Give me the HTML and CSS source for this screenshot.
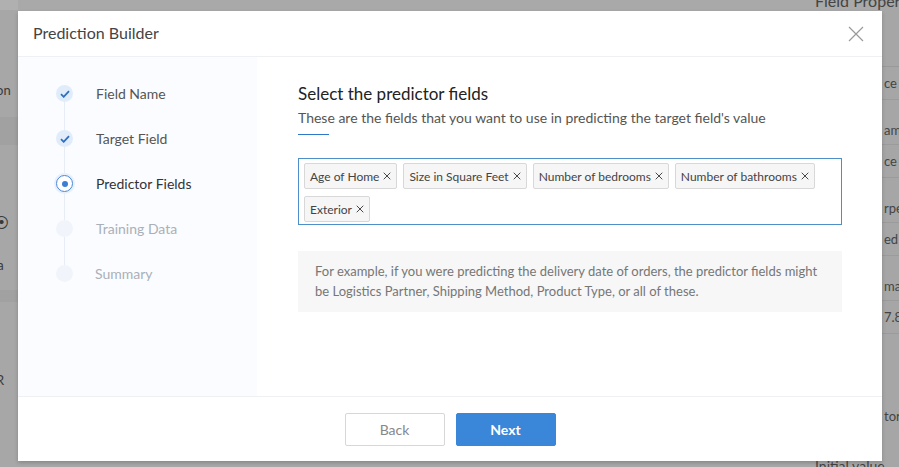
FILE: index.html
```html
<!DOCTYPE html>
<html>
<head>
<meta charset="utf-8">
<link rel="stylesheet" href="styles.css">
</head>
<body>
<div class="backdrop">
  <div class="bg-left">
    <div class="bl-toprect"></div>
    <div class="bl-row bl-top"><span class="bl-bold">p</span></div>
    <div class="bl-row bl-tion">tion</div>
    <div class="bl-band"></div>
    <div class="bl-row bl-icon">⦿</div>
    <div class="bl-row">tra</div>
    <div class="bl-band bl-band2"></div>
    <div class="bl-row bl-sm">]</div>
    <div class="bl-row bl-sm">R</div>
  </div>
  <div class="bg-mid"></div>
  <div class="bg-right">
    <div class="br-head">Field Proper</div>
    <div class="br-row">ce</div>
    <div class="br-row br-tall">ame</div>
    <div class="br-row">ce</div>
    <div class="br-row br-tall">rpe</div>
    <div class="br-row">ed</div>
    <div class="br-row br-tall">mat</div>
    <div class="br-row">7.8</div>
    <div class="br-gap"></div>
    <div class="br-row br-last">tor</div>
    <div class="br-foot">Initial value</div>
  </div>
</div>

<div class="modal">
  <div class="modal-header">
    <span class="modal-title">Prediction Builder</span>
    <svg class="close" width="16" height="16" viewBox="0 0 16 16"><path d="M1 1L15 15M15 1L1 15" stroke="#9a9a9a" stroke-width="1.2" fill="none"/></svg>
  </div>
  <div class="modal-body">
    <div class="steps">
      <div class="step done">
        <span class="dot"><svg width="10" height="8" viewBox="0 0 10 8"><path d="M1 4.2L3.7 6.8L9 1.2" stroke="#2f6fbd" stroke-width="1.8" fill="none"/></svg></span>
        <span class="label">Field Name</span>
      </div>
      <div class="step done">
        <span class="dot"><svg width="10" height="8" viewBox="0 0 10 8"><path d="M1 4.2L3.7 6.8L9 1.2" stroke="#2f6fbd" stroke-width="1.8" fill="none"/></svg></span>
        <span class="label">Target Field</span>
      </div>
      <div class="step active">
        <span class="dot"><span class="inner"></span></span>
        <span class="label">Predictor Fields</span>
      </div>
      <div class="step todo">
        <span class="dot"></span>
        <span class="label">Training Data</span>
      </div>
      <div class="step todo last">
        <span class="dot"></span>
        <span class="label">Summary</span>
      </div>
    </div>
    <div class="content">
      <h2 class="heading">Select the predictor fields</h2>
      <p class="sub">These are the fields that you want to use in predicting the target field's value</p>
      <div class="underline"></div>
      <div class="tagbox">
        <span class="tag">Age of Home<svg class="x" width="9" height="9" viewBox="0 0 9 9"><path d="M0.8 0.8L8.2 8.2M8.2 0.8L0.8 8.2" stroke="#444" stroke-width="1.1" fill="none"/></svg></span>
        <span class="tag">Size in Square Feet<svg class="x" width="9" height="9" viewBox="0 0 9 9"><path d="M0.8 0.8L8.2 8.2M8.2 0.8L0.8 8.2" stroke="#444" stroke-width="1.1" fill="none"/></svg></span>
        <span class="tag">Number of bedrooms<svg class="x" width="9" height="9" viewBox="0 0 9 9"><path d="M0.8 0.8L8.2 8.2M8.2 0.8L0.8 8.2" stroke="#444" stroke-width="1.1" fill="none"/></svg></span>
        <span class="tag">Number of bathrooms<svg class="x" width="9" height="9" viewBox="0 0 9 9"><path d="M0.8 0.8L8.2 8.2M8.2 0.8L0.8 8.2" stroke="#444" stroke-width="1.1" fill="none"/></svg></span>
        <span class="tag">Exterior<svg class="x" width="9" height="9" viewBox="0 0 9 9"><path d="M0.8 0.8L8.2 8.2M8.2 0.8L0.8 8.2" stroke="#444" stroke-width="1.1" fill="none"/></svg></span>
      </div>
      <div class="info">For example, if you were predicting the delivery date of orders, the predictor fields might be Logistics Partner, Shipping Method, Product Type, or all of these.</div>
    </div>
  </div>
  <div class="modal-footer">
    <button class="btn btn-back">Back</button>
    <button class="btn btn-next">Next</button>
  </div>
</div>
</body>
</html>
```

FILE: styles.css
```css
* { box-sizing: border-box; }
html, body { margin: 0; padding: 0; }
body {
  width: 899px;
  height: 467px;
  overflow: hidden;
  font-family: Lato, "Open Sans", sans-serif;
  background: #a9a9a9;
  position: relative;
}

/* backdrop (dimmed app behind) */
.backdrop {
  display: flex;
  height: 467px;
  color: #3a3a3a;
  font-size: 13px;
}
.bg-left {
  width: 18px;
  overflow: hidden;
  display: flex;
  flex-direction: column;
  background: #a7a7a7;
}
.bl-toprect { height: 10px; margin-bottom: 40px; background: #b0b0b0; flex: none; }
.bl-row { height: 30px; line-height: 30px; white-space: nowrap; margin-left: -12px; flex: none; }
.bl-top { margin-left: -8px; height: 20px; line-height: 20px; }
.bl-tion { margin-top: 5px; }
.bl-bold { font-weight: 700; font-size: 14px; }
.bl-band { height: 28px; background: #a1a1a1; margin: 12px 0 62px; flex: none; }
.bl-band2 { height: 12px; margin: 10px 0 23px; }
.bl-icon { margin-left: -6px; font-size: 15px; margin-bottom: 13px; }
.bl-sm { margin-left: -4px; margin-bottom: 10px; }
.bg-mid { flex: 1; }
.bg-right {
  width: 17px;
  display: flex;
  flex-direction: column;
  background: #a6a6a6;
}
.br-head {
  height: 67px;
  flex: none;
  margin-left: -67px;
  font-size: 16px;
  line-height: 2px;
  white-space: nowrap;
  color: #444;
  border-bottom: 1px solid #999;
  padding-left: 0;
}
.br-head { margin-right: 0; }
.br-row {
  height: 33px;
  flex: none;
  line-height: 33px;
  white-space: nowrap;
  border-bottom: 1px solid #9b9b9b;
  color: #444;
  padding-left: 2px;
}
.br-tall { height: 45px; line-height: 20px; padding-top: 20px; }
.br-gap { height: 66px; flex: none; }
.br-last { border-bottom: none; }
.br-foot {
  margin-top: 24px;
  white-space: nowrap;
  margin-left: -67px;
  color: #444;
  font-size: 14px;
}

/* modal */
.modal {
  position: absolute;
  left: 18px;
  top: 11px;
  width: 864px;
  height: 450px;
  background: #fff;
  display: flex;
  flex-direction: column;
  box-shadow: 0 2px 4px rgba(0,0,0,0.2);
}
.modal-header {
  height: 46px;
  flex: none;
  display: flex;
  align-items: center;
  justify-content: space-between;
  padding: 0 18px 0 15px;
  border-bottom: 1px solid #eef0f3;
}
.modal-title { font-size: 16px; color: #444; margin-top: -2px; }
.close { display: block; }

.modal-body {
  flex: 1;
  display: flex;
  min-height: 0;
}
.steps {
  width: 239px;
  background: #fafcff;
  padding-top: 14px;
  display: flex;
  flex-direction: column;
}
.step {
  display: flex;
  align-items: center;
  height: 45px;
  position: relative;
  padding-left: 38px;
}
.step::after {
  content: "";
  position: absolute;
  left: 46px;
  top: 30px;
  height: 30px;
  width: 1px;
  background: #e6edf7;
}
.step.last::after { display: none; }
.dot {
  width: 17px;
  height: 17px;
  border-radius: 50%;
  display: flex;
  align-items: center;
  justify-content: center;
  flex: none;
  position: relative;
  z-index: 1;
}
.done .dot { background: #e1ecfa; }
.active .dot { background: #fff; border: 1.5px solid #4a88d6; box-shadow: 0 0 0 2px #e8f0fb; }
.active .inner { width: 6px; height: 6px; border-radius: 50%; background: #3a7fd5; }
.todo .dot { background: #f1f5fb; }
.label { margin-left: 23px; font-size: 14px; }
.done .label { color: #555; }
.active .label { color: #333; }
.todo .label { color: #aab0b8; }
.last .label { margin-left: 22px; }

.content {
  flex: 1;
  padding: 27px 40px 0 41px;
}
.heading {
  margin: 0;
  font-size: 17px;
  font-weight: 400;
  color: #222;
  line-height: 20px;
}
.sub {
  margin: 5px 0 0;
  font-size: 14px;
  color: #555;
  line-height: 18px;
}
.underline {
  width: 31px;
  height: 1px;
  background: #2d78c8;
  margin-top: 7px;
}
.tagbox {
  margin-top: 23px;
  border: 1px solid #4f8fc9;
  padding: 4px 5px 2px;
  display: flex;
  flex-wrap: wrap;
  gap: 7px 6px;
  min-height: 67px;
  align-content: flex-start;
}
.tag {
  height: 26px;
  display: inline-flex;
  align-items: center;
  border: 1px solid #d8d8d8;
  background: #f6f6f6;
  border-radius: 2px;
  padding: 0 5px;
  font-size: 12px;
  color: #444;
  white-space: nowrap;
}
.x { margin-left: 4px; display: block; width: 8px; height: 8px; }

.info {
  margin-top: 26px;
  background: #f7f7f7;
  padding: 10px 17px 11px;
  font-size: 13px;
  line-height: 20px;
  color: #767676;
}

.modal-footer {
  height: 65px;
  flex: none;
  border-top: 1px solid #eef0f3;
  display: flex;
  align-items: center;
  justify-content: center;
  gap: 11px;
}
.btn {
  width: 100px;
  height: 33px;
  font-family: Lato, "Open Sans", sans-serif;
  font-size: 14px;
  border-radius: 2px;
  cursor: pointer;
}
.btn-back {
  background: #fff;
  border: 1px solid #d7d7d7;
  color: #888;
}
.btn-next {
  background: #3a86d8;
  border: 1px solid #3a86d8;
  color: #fff;
  font-weight: 700;
}
```
